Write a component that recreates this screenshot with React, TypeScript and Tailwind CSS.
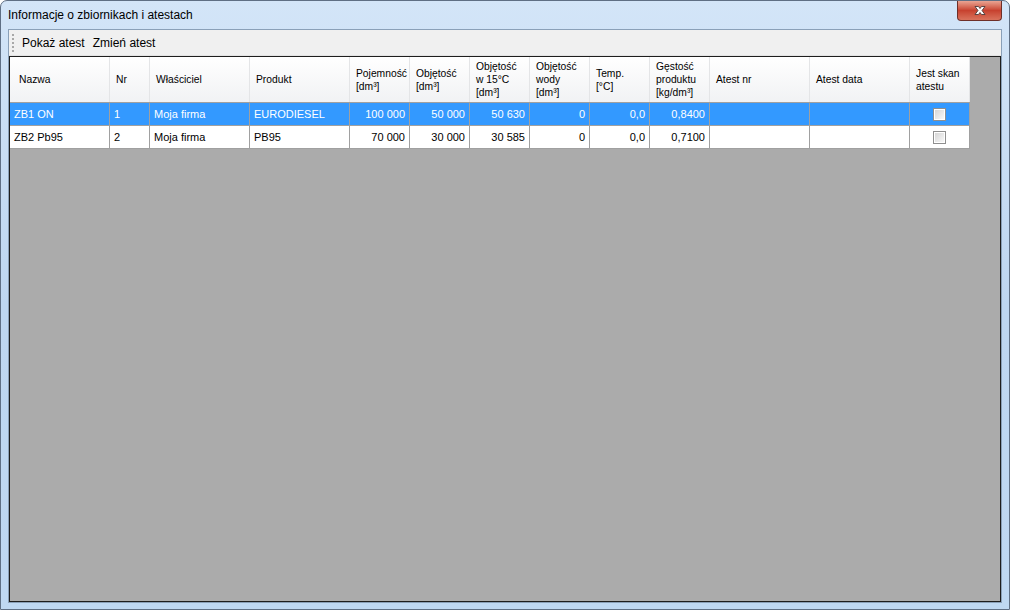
import React from "react";

interface Column {
  label: string[];
  width: number;
  align: "left" | "right" | "center";
}

const columns: Column[] = [
  { label: ["Nazwa"], width: 100, align: "left" },
  { label: ["Nr"], width: 40, align: "left" },
  { label: ["Właściciel"], width: 100, align: "left" },
  { label: ["Produkt"], width: 100, align: "left" },
  { label: ["Pojemność", "[dm³]"], width: 60, align: "right" },
  { label: ["Objętość", "[dm³]"], width: 60, align: "right" },
  { label: ["Objętość", "w 15°C", "[dm³]"], width: 60, align: "right" },
  { label: ["Objętość", "wody", "[dm³]"], width: 60, align: "right" },
  { label: ["Temp.", "[°C]"], width: 60, align: "right" },
  { label: ["Gęstość", "produktu", "[kg/dm³]"], width: 60, align: "right" },
  { label: ["Atest nr"], width: 100, align: "left" },
  { label: ["Atest data"], width: 100, align: "left" },
  { label: ["Jest skan", "atestu"], width: 60, align: "center" },
];

const rows = [
  ["ZB1 ON", "1", "Moja firma", "EURODIESEL", "100 000", "50 000", "50 630", "0", "0,0", "0,8400", "", "", "check"],
  ["ZB2 Pb95", "2", "Moja firma", "PB95", "70 000", "30 000", "30 585", "0", "0,0", "0,7100", "", "", "check"],
];

// szary checkbox jak w WinForms DataGridView
const CheckBox = () => (
  <div className="w-[13px] h-[13px] border border-[#8f8f8f] bg-white p-[1px]">
    <div className="w-full h-full bg-gradient-to-br from-[#d6d6d6] to-[#f8f8f8]" />
  </div>
);

const CloseButton = () => (
  <div className="w-[45px] h-[20px] rounded-b-[4px] border border-t-0 border-[#6e2f28] bg-gradient-to-b from-[#e9a493] via-[#c7412f] to-[#d9725c] flex items-center justify-center">
    <svg width="14" height="11" viewBox="0 0 14 11">
      <path
        d="M2 1.5 L5.5 1.5 L7 3.5 L8.5 1.5 L12 1.5 L9 5.5 L12 9.5 L8.5 9.5 L7 7.5 L5.5 9.5 L2 9.5 L5 5.5 Z"
        fill="#ffffff"
        stroke="#4b3a3a"
        strokeWidth="0.9"
        strokeLinejoin="round"
      />
    </svg>
  </div>
);

export default function App() {
  return (
    <div
      className="w-[1010px] h-[610px] bg-white"
      style={{ fontFamily: '"Liberation Sans", Arial, sans-serif' }}
    >
      <div className="w-full h-full rounded-t-[7px] border border-[#5f6f84] bg-gradient-to-b from-[#d3e5f8] via-[#bed6f0] to-[#bfd8f2] flex flex-col px-[7px] pb-[6px]">
        {/* Pasek tytułu */}
        <div className="h-[28px] flex items-start shrink-0">
          <div className="pt-[5px] text-[12px] text-black flex-1">
            Informacje o zbiornikach i atestach
          </div>
          <CloseButton />
        </div>

        {/* Obszar klienta */}
        <div className="flex-1 flex flex-col border border-[#8aa0b8] bg-[#f0f0f0] min-h-0">
          {/* Pasek narzędzi */}
          <div className="h-[26px] shrink-0 flex items-center border-b border-[#e3e3e3] bg-[#f0f0f0]">
            <div className="ml-[3px] mr-[8px] flex flex-col gap-[2px]">
              {[0, 1, 2, 3, 4].map((i) => (
                <div key={i} className="w-[2px] h-[2px] bg-[#a8a8a8]" />
              ))}
            </div>
            <span className="text-[12px] text-black mr-[8px]">Pokaż atest</span>
            <span className="text-[12px] text-black">Zmień atest</span>
          </div>

          {/* Siatka */}
          <div className="flex-1 border border-[#1e1e1e] bg-[#ababab] min-h-0">
            <div className="w-fit">
              {/* Nagłówek */}
              <div className="flex h-[46px] border-b border-[#a0a0a0] bg-gradient-to-b from-white to-[#f1f2f4]">
                {columns.map((col, i) => (
                  <div
                    key={i}
                    style={{ width: col.width }}
                    className={`shrink-0 flex flex-col justify-center text-[10.3px] leading-[13px] text-black border-r border-[#e4e5e7] ${
                      i === 0 ? "pl-[9px]" : "pl-[6px]"
                    }`}
                  >
                    {col.label.map((l) => (
                      <span key={l} className="whitespace-nowrap">
                        {l}
                      </span>
                    ))}
                  </div>
                ))}
              </div>

              {/* Wiersze */}
              {rows.map((row, r) => (
                <div
                  key={r}
                  className={`flex h-[23px] border-b border-[#a0a0a0] ${
                    r === 0 ? "bg-[#3399ff] text-white" : "bg-white text-black"
                  }`}
                >
                  {row.map((cell, c) => {
                    const col = columns[c];
                    return (
                      <div
                        key={c}
                        style={{ width: col.width }}
                        className={`shrink-0 flex items-center text-[11px] px-[4px] border-r border-[#a0a0a0] ${
                          col.align === "right"
                            ? "justify-end"
                            : col.align === "center"
                            ? "justify-center"
                            : "justify-start"
                        }`}
                      >
                        {cell === "check" ? <CheckBox /> : cell}
                      </div>
                    );
                  })}
                </div>
              ))}
            </div>
          </div>
        </div>
      </div>
    </div>
  );
}
